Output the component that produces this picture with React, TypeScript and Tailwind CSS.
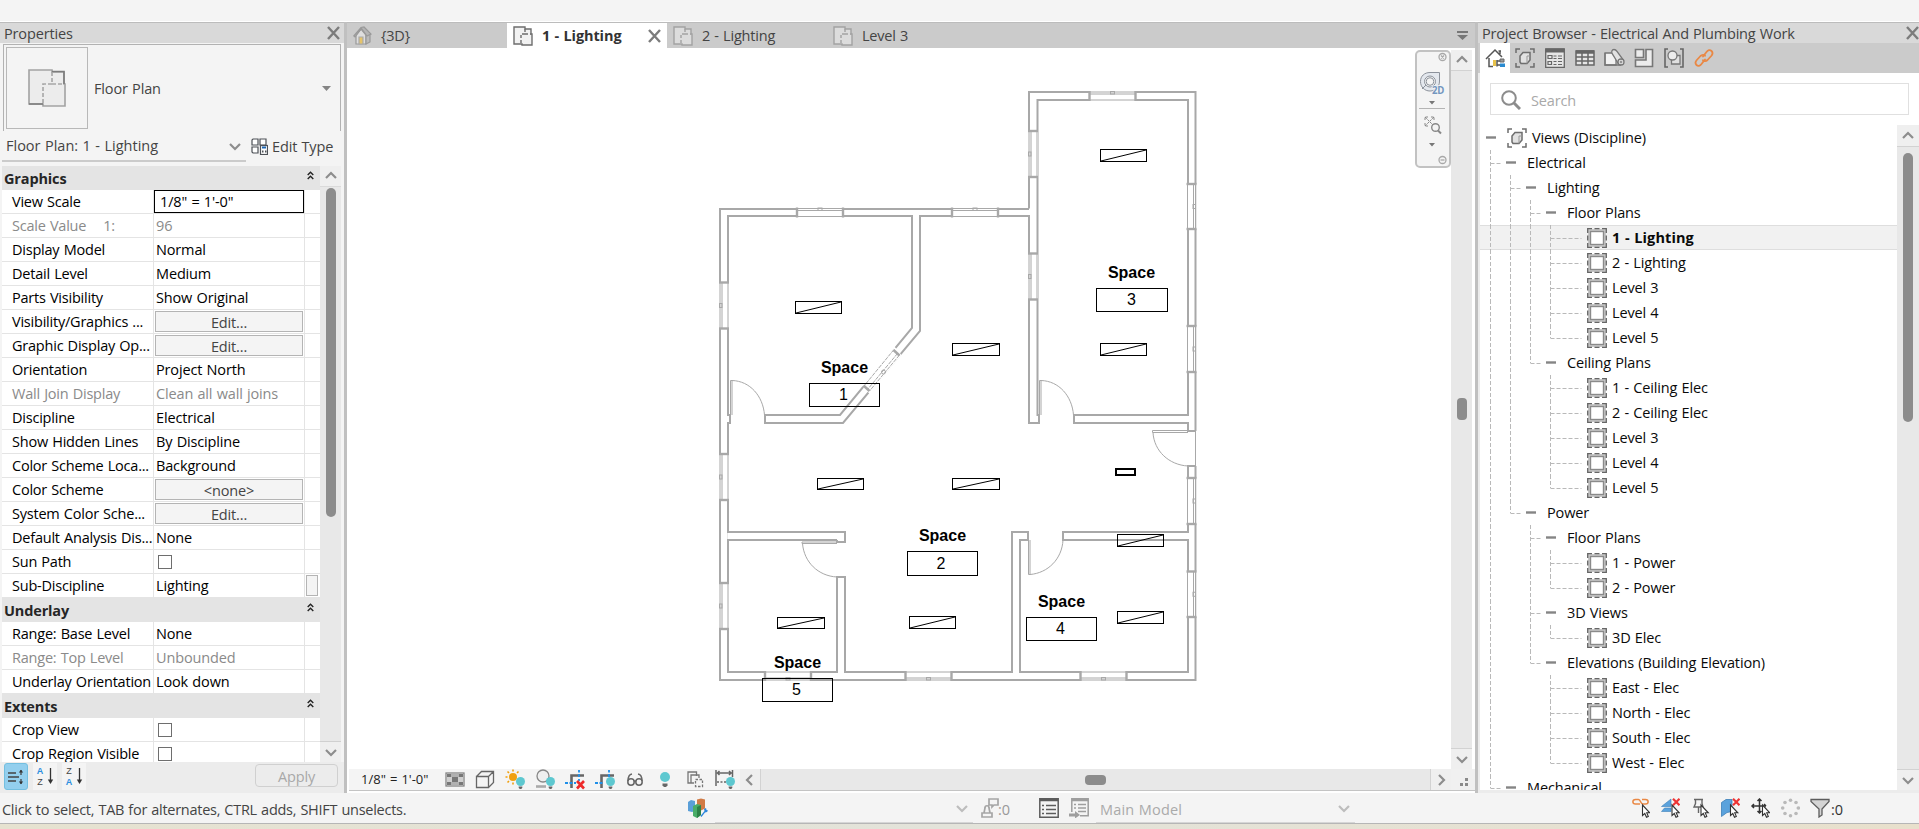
import React from "react";

/* ---------- small shared drawings ---------- */

const Chevron = ({ dir, className = "" }: { dir: "up" | "down" | "left" | "right"; className?: string }) => {
  const d = { up: "M1 8 6 3l5 5", down: "M1 4l5 5 5-5", left: "M8 1 3 6l5 5", right: "M4 1l5 5-5 5" }[dir];
  return (
    <svg width="12" height="12" viewBox="0 0 12 12" fill="none" stroke="currentColor" strokeWidth="2.2" className={className}>
      <path d={d} />
    </svg>
  );
};

const CloseX = () => (
  <svg width="13" height="14" viewBox="0 0 13 14" fill="none" stroke="#7c7c7c" strokeWidth="2.4">
    <path d="M1 1l11 12M12 1 1 13" />
  </svg>
);

const Collapse = () => (
  <svg width="7" height="9" viewBox="0 0 7 9" fill="none" stroke="#222" strokeWidth="1.4">
    <path d="M.7 4 3.5 1.2 6.3 4M.7 8 3.5 5.2 6.3 8" />
  </svg>
);

const PlanIcon = ({ dim = false }: { dim?: boolean }) => (
  <svg width="20" height="20" viewBox="0 0 20 20" fill={dim ? "#dcdcdc" : "#f2f2f2"} stroke={dim ? "#a2a2a2" : "#6e6e6e"} strokeWidth="1.4">
    <path d="M1 1h11v2h6v5h1v11H9v-1H1z" />
    <path d="M12 3v5h6M12 8H8v10" fill="none" strokeDasharray="3 2" />
  </svg>
);

const Bulb = () => (
  <>
    <circle cx="15.5" cy="12.5" r="4.5" fill="#5ec8d0" />
    <path d="M13.7 17.6h3.6v1.2l-1 1.2h-1.6l-1-1.2z" fill="#666" />
  </>
);

const Cursor = ({ x = 0, y = 0 }: { x?: number; y?: number }) => (
  <path
    transform={`translate(${x} ${y})`}
    d="M10.5 7v10.500l2.300-2 1.700 3.700 1.800-.8-1.600-3.600h3.100z"
    fill="#fff"
    stroke="#333"
    strokeWidth="1.1"
  />
);

/* ---------- properties palette ---------- */

type Row = { label: string; value?: string; kind?: "text" | "edit" | "button" | "check" | "sub"; dim?: boolean };

const graphics: Row[] = [
  { label: "View Scale", value: "1/8\" = 1'-0\"", kind: "edit" },
  { label: "Scale Value    1:", value: "96", dim: true },
  { label: "Display Model", value: "Normal" },
  { label: "Detail Level", value: "Medium" },
  { label: "Parts Visibility", value: "Show Original" },
  { label: "Visibility/Graphics ...", value: "Edit...", kind: "button" },
  { label: "Graphic Display Op...", value: "Edit...", kind: "button" },
  { label: "Orientation", value: "Project North" },
  { label: "Wall Join Display", value: "Clean all wall joins", dim: true },
  { label: "Discipline", value: "Electrical" },
  { label: "Show Hidden Lines", value: "By Discipline" },
  { label: "Color Scheme Loca...", value: "Background" },
  { label: "Color Scheme", value: "<none>", kind: "button" },
  { label: "System Color Sche...", value: "Edit...", kind: "button" },
  { label: "Default Analysis Dis...", value: "None" },
  { label: "Sun Path", kind: "check" },
  { label: "Sub-Discipline", value: "Lighting", kind: "sub" },
];
const underlay: Row[] = [
  { label: "Range: Base Level", value: "None" },
  { label: "Range: Top Level", value: "Unbounded", dim: true },
  { label: "Underlay Orientation", value: "Look down" },
];
const extents: Row[] = [
  { label: "Crop View", kind: "check" },
  { label: "Crop Region Visible", kind: "check" },
];

const PropRow = ({ row }: { row: Row }) => (
  <div className={`flex h-6 shrink-0 border-b border-[#e4e4e4] ${row.dim ? "text-[#8a8a8a]" : "text-black"}`}>
    <div className="w-[152px] shrink-0 overflow-hidden whitespace-pre border-r border-[#e4e4e4] pl-[10px] leading-[23px] tracking-[-0.22px]">{row.label}</div>
    <div className="flex w-[151px] shrink-0 items-center border-r border-[#e4e4e4]">
      {row.kind === "edit" ? (
        <div className="h-[23px] w-full border border-black pl-[5px] leading-[21px]">{row.value}</div>
      ) : row.kind === "button" ? (
        <div className="mx-px h-[21px] w-full border border-[#b4b4b4] bg-[#f4f4f4] text-center leading-[21px] text-[#444]">{row.value}</div>
      ) : row.kind === "check" ? (
        <div className="ml-1 size-[14px] border border-[#6e6e6e] bg-white" />
      ) : (
        <span className="pl-[2px] leading-[23px]">{row.value}</span>
      )}
    </div>
    {row.kind === "sub" && <div className="ml-px mt-px h-[21px] w-3 border border-[#b4b4b4] bg-[#f4f4f4]" />}
  </div>
);

const Section = ({ title, rows }: { title: string; rows: Row[] }) => (
  <>
    <div className="flex h-6 shrink-0 justify-between bg-[#e4e4e4] pl-[2px] pr-[6px] pt-[5px]">
      <span className="font-bold leading-[16px] text-[#262626]">{title}</span>
      <Collapse />
    </div>
    {rows.map((r) => (
      <PropRow key={r.label} row={r} />
    ))}
  </>
);

const Properties = () => (
  <aside className="flex w-[344px] shrink-0 flex-col bg-[#f4f4f4]">
    <div className="flex h-[21px] shrink-0 items-center justify-between border-t border-[#bcbcbc] bg-[#d9d9d9] pl-1 pr-1 text-[#444]">
      <span className="pt-[2px]">Properties</span>
      <CloseX />
    </div>
    <div className="ml-[3px] mr-[3px] mt-px flex h-[87px] shrink-0 items-start border-x border-t border-[#b2b2b2] pl-[2px] pt-[2px] text-[#444]">
      <div className="flex size-[82px] items-center justify-center border border-[#b8b8b8]">
        <svg width="38" height="38" viewBox="0 0 38 38" fill="#ececec" stroke="#a2a2a2" strokeWidth="1.6">
          <path d="M1 1h23v2h12v12h1v22H15v-2H1z" />
          <path d="M24 2.500h12V15M1 35h14" fill="none" stroke="#7c7c7c" />
          <path d="M24 3v12h12M24 15h-9v20" fill="none" stroke="#a6a6a6" strokeDasharray="4 2" />
        </svg>
      </div>
      <span className="pl-[6px] leading-[84px]">Floor Plan</span>
      <svg className="ml-auto mr-[9px] mt-[39px]" width="9" height="6" viewBox="0 0 9 6" fill="#858585">
        <path d="M0 0h9L4.500 5z" />
      </svg>
    </div>
    <div className="flex h-[35px] shrink-0 items-start text-[#444]">
      <div className="ml-[2px] flex h-[31px] w-[244px] items-center justify-between border-b-2 border-[#cbcbcb] pl-1 pr-[5px]">
        <span className="pt-px tracking-[0px]">Floor Plan: 1 - Lighting</span>
        <Chevron dir="down" className="text-[#8d8d8d]" />
      </div>
      <svg className="ml-[5px] mt-[7px]" width="17" height="17" viewBox="0 0 17 17" fill="#fff" stroke="#4d5157" strokeWidth="1.2">
        <path d="M2 1h5v6H1V2zM9 1h6v6H9zM1 9h6v6H2l-1-1z" />
        <rect x="9.500" y="7.500" width="7" height="9" />
        <path d="M11 9.500h4" stroke="#1c67b5" strokeWidth="2" />
        <path d="M11 13.500h1.500M14 13.500h1.500" strokeWidth="2" />
      </svg>
      <span className="ml-1 leading-[31px]">Edit Type</span>
    </div>
    <div className="flex h-[596px] shrink-0 pl-[2px]">
      <div className="flex w-[318px] flex-col overflow-hidden bg-white">
        <Section title="Graphics" rows={graphics} />
        <Section title="Underlay" rows={underlay} />
        <Section title="Extents" rows={extents} />
      </div>
      <div className="flex w-[21px] flex-col items-center bg-[#e8e8e8] text-[#8d8d8d]">
        <div className="flex h-[21px] w-full items-center justify-center border-b border-[#dadada] bg-[#efefef]">
          <Chevron dir="up" />
        </div>
        <div className="mt-px h-[329px] w-[10px] rounded-full bg-[#8c8c8c]" />
        <div className="mt-auto flex h-[21px] w-full items-center justify-center border-t border-[#d0d0d0] bg-[#efefef]">
          <Chevron dir="down" />
        </div>
      </div>
    </div>
    <div className="flex h-[31px] shrink-0 items-start bg-[#ececec] pl-1 pt-[1px]">
      <div className="flex h-[27px] w-6 items-center justify-center rounded-[3px] border border-[#74bfe0] bg-[#93cfee]">
        <svg width="18" height="18" viewBox="0 0 18 18" fill="none" stroke="#444" strokeWidth="1.3">
          <path d="M1 5h8M1 9h11M1 13h8M14 2v5M14 11v5" />
          <path d="m11.800 4.500 2.200-2.800 2.200 2.800zM11.800 13.500l2.200 2.800 2.200-2.800z" fill="#333" stroke="none" />
        </svg>
      </div>
      {["AZ", "ZA"].map((p) => (
        <div key={p} className="ml-[5px] flex h-[27px] w-[24px] items-center bg-[#f4f4f4] pl-[3px]">
          <div className="flex w-[8px] flex-col text-center font-['Liberation_Sans',sans-serif] text-[9px] leading-[10.5px] tracking-normal">
            {p.split("").map((c) => (
              <span key={c} className={c === "A" ? "font-bold text-[#2b8fe0]" : "text-[#444]"}>
                {c}
              </span>
            ))}
          </div>
          <svg className="ml-[3px]" width="7" height="17" viewBox="0 0 7 17">
            <path d="M3.500 0v13" stroke="#333" strokeWidth="1.300" />
            <path d="M.8 11.500h5.400L3.500 16z" fill="#333" />
          </svg>
        </div>
      ))}
      <div className="ml-auto mr-[6px] mt-px h-[23px] w-[83px] rounded-[4px] border border-[#d0d0d0] text-center leading-[23px] text-[#a8a8a8]">Apply</div>
    </div>
  </aside>
);

/* ---------- drawing area ---------- */

const Win = ({ x, y, len, side }: { x: number; y: number; len: number; side: "l" | "r" | "t" | "b" }) => {
  const v = side === "l" || side === "r";
  const outer = side === "l" || side === "t";
  const m = len / 2;
  const o = outer ? 0 : 8;
  const o2 = outer ? 2 : 6;
  const inr = outer ? 8 : 0;
  const mk = outer ? -0.5 : 5.5;
  const L = (a: number, b: number, c: number, d: number, w: number) =>
    v ? <line x1={x + b} y1={y + a} x2={x + d} y2={y + c} strokeWidth={w} /> : <line x1={x + a} y1={y + b} x2={x + c} y2={y + d} strokeWidth={w} />;
  return (
    <g stroke="#a8a8a8" fill="none">
      {v ? <rect x={x - 1} y={y} width="10" height={len} fill="#fff" stroke="none" /> : <rect x={x} y={y - 1} width={len} height="10" fill="#fff" stroke="none" />}
      {L(0, o, len, o, 1)}
      {L(0, o2, len, o2, 1)}
      {L(0, inr, len, inr, 1)}
      {L(0, -1, 0, 9, 2.4)}
      {L(len, -1, len, 9, 2.4)}
      {v ? <rect x={x + mk} y={y + m - 2} width="2.500" height="4" strokeWidth="1" /> : <rect x={x + m - 2} y={y + mk} width="4" height="2.500" strokeWidth="1" />}
    </g>
  );
};

const fixtures: [number, number, number, number][] = [
  [1100, 149, 46, 12],
  [795, 301, 46, 12],
  [952, 343, 47, 12],
  [1100, 343, 46, 12],
  [817, 478, 46, 11],
  [952, 478, 47, 11],
  [1117, 534, 46, 12],
  [1117, 611, 46, 12],
  [777, 617, 47, 11],
  [909, 616, 46, 12],
];

const tags = [
  { n: "1", x: 809, y: 383, w: 70, h: 23, cx: 844.5, base: 373, nx: 843.5, nb: 400 },
  { n: "3", x: 1096, y: 288, w: 71, h: 23, cx: 1131.5, base: 278, nx: 1131.5, nb: 305 },
  { n: "2", x: 907, y: 551, w: 70, h: 24, cx: 942.5, base: 541, nx: 941, nb: 569 },
  { n: "4", x: 1026, y: 617, w: 70, h: 23, cx: 1061.5, base: 607, nx: 1060.5, nb: 634 },
  { n: "5", x: 762, y: 678, w: 70, h: 23, cx: 797.5, base: 668, nx: 796.5, nb: 695 },
];

const FloorPlan = () => (
  <svg width="1104" height="721" viewBox="347 48 1104 721" className="block">
    <g fill="none" stroke="#a8a8a8" strokeWidth="2">
      <path d="M1029 208.500V92h166.500V431M1195.500 466V680H720V209h309" />
      <path d="M728 540h109M728 540v132h109V577h8v95h167V532h16v8h-8v132h168V540h-125v-8h125v-66h7" />
      <path d="M728 540V532h117v10h-8v-2M728 532V423h2v-8h-2V216h184v112L840 415H765v8h78l77-92V216h109v207h10v-8h-1.500V100H1188V415h-114v8h114v8h7" />
      <path d="M729 533v6" stroke="#fff" strokeWidth="3.500" />
    </g>
    <Win x={720} y={282.5} len={46} side="l" />
    <Win x={720} y={454} len={46} side="l" />
    <Win x={720} y={583} len={46} side="l" />
    <Win x={1029} y={131} len={46} side="l" />
    <Win x={1029} y={253.5} len={46} side="l" />
    <Win x={1187.5} y={184} len={45} side="r" />
    <Win x={1187.5} y={326} len={46} side="r" />
    <Win x={1187.5} y={478} len={46} side="r" />
    <Win x={1187.5} y={571.5} len={45.5} side="r" />
    <Win x={797} y={208.5} len={46} side="t" />
    <Win x={952} y={208.5} len={46} side="t" />
    <Win x={1089.5} y={92} len={46} side="t" />
    <Win x={765} y={672} len={46} side="b" />
    <Win x={905.5} y={672} len={46} side="b" />
    <Win x={1080.5} y={672} len={46} side="b" />

    <path d="M894.500 349l5 6-30 36.500-5.500-6z" fill="#fff" stroke="#fff" strokeWidth="3" />
    <g fill="none" stroke="#a8a8a8" strokeWidth="1">
      <path d="M894 349.500 864 386" strokeDasharray="4 1" />
      <path d="M899.500 355 869.500 391M897.500 353.500 867.500 389.500" strokeDasharray="4 1" />
      <circle cx="883.500" cy="372" r="2" />
      <path d="M893.500 350l6 5.500M863.500 385.500l6 5.500" strokeWidth="2.400" />
      <path d="M730.500 415V380.500h1.500V415M732 380.500C750 381 763 396 764.500 415" />
      <path d="M1039.500 415V380.500h1.500V415M1041 380.500C1059 381 1072 396 1073.500 415" />
      <path d="M1188 430.500H1152.500v2H1188M1153 432.500C1154 451 1169 465 1188 466M1195.500 431v35" />
      <path d="M837 542h-35v1.500h35M802.500 543.500C804 562 818 576 837 577" />
      <path d="M1028.500 540v34.500h1.500V540M1030 574.500C1048 573 1062 559 1063 540" />
    </g>

    <g fill="none" stroke="#000" strokeWidth="1">
      {fixtures.map(([x, y, w, h]) => (
        <g key={`${x}-${y}`}>
          <rect x={x + 0.5} y={y + 0.5} width={w} height={h} />
          <path d={`M${x + 1} ${y + h}L${x + w} ${y + 1}`} />
        </g>
      ))}
      <rect x="1116" y="469" width="19" height="6" strokeWidth="2" />
      {tags.map((t) => (
        <rect key={t.n} x={t.x + 0.5} y={t.y + 0.5} width={t.w} height={t.h} />
      ))}
    </g>
    {tags.map((t) => (
      <g key={t.n} textAnchor="middle" className="font-['Liberation_Sans',sans-serif] text-[16px] tracking-normal">
        <text x={t.cx} y={t.base} className="font-bold">
          Space
        </text>
        <text x={t.nx} y={t.nb}>
          {t.n}
        </text>
      </g>
    ))}
  </svg>
);

const NavBar = () => (
  <div className="absolute left-[1068px] top-[2px] h-[118px] w-[36px] rounded-[5px] border-2 border-[#c2c2c2] bg-[#f4f4f4]">
    <svg width="32" height="114" viewBox="0 0 32 114" fill="none" stroke="#8c929b" strokeWidth="1">
      <g stroke="#a8a8a8" strokeWidth="1.300">
        <circle cx="25.500" cy="5" r="3.500" />
        <path d="m24 3.500 3 3m0-3-3 3" />
        <circle cx="25.500" cy="108" r="3.500" />
        <path d="M23.500 108h4" />
      </g>
      <path d="M13 20.500h9.500V29c0 6-4 10-9.500 10s-9.500-4-9.500-9.500 4-9 9.500-9z" fill="#e4e8ee" />
      <circle cx="13" cy="29.500" r="5.500" fill="#f4f4f4" />
      <circle cx="13" cy="29.500" r="3.800" />
      <path d="m5 37 4-4" />
      <path d="M12 49h6l-3 3.500zM12 91h6l-3 3.500z" fill="#777" stroke="none" />
      <path d="M2 56.500h26" stroke="#b4b4b4" />
      <path d="M8 65l9 9M17 65l-9 9M8 68v-3h3M14 65h3v3M8 71v3h3" stroke="#888" strokeDasharray="2.500 1" />
      <circle cx="18.500" cy="75.500" r="3.800" stroke="#888" strokeWidth="1.400" fill="#f4f4f4" />
      <path d="m21 78.500 3 3" stroke="#888" strokeWidth="2" />
      <text x="15" y="42" fontSize="10" fontWeight="700" fill="#7396bf" stroke="#f4f4f4" strokeWidth="1.500" paintOrder="stroke" letterSpacing="-0.300" textLength="12" lengthAdjust="spacingAndGlyphs">
        2D
      </text>
    </svg>
  </div>
);

const ViewBarIcons = () => (
  <svg className="ml-4 shrink-0" width="291" height="21" viewBox="445 769 291 21" fill="none" stroke="#666" strokeWidth="1.300">
    <rect x="446" y="773" width="18" height="13" stroke="#858585" fill="#f4f4f4" />
    <path d="M447 774h4v3h-4zM459 774h4v3h-4zM452 777h6v5h-6zM447 782h4v3h-4zM459 782h4v3h-4z" fill="#777" stroke="none" />
    <path d="M447 777h5v5h-5zM458 777h5v5h-5z" fill="#cfcfcf" stroke="none" />
    <path d="M451 774h8v3h-8zM451 782h8v3h-8z" fill="#b0b0b0" stroke="none" />
    <path d="M476.500 776.500h12v11h-12zM476.500 776.500l5-5h12v11l-5 5M488.500 776.500l5-5" />
    <circle cx="513" cy="777" r="4" fill="#f0a010" stroke="none" />
    <path d="M513 769.500v2M513 782.500v2M505.500 777h2M507.500 771.500l1.500 1.500M518.500 771.500l-1.500 1.500M507.500 782.500l1.500-1.500" stroke="#f0a010" strokeWidth="1.600" />
    <g transform="translate(505 769)" stroke="none"><Bulb /></g>
    <circle cx="543" cy="776" r="6" fill="#efefef" stroke="#888" />
    <path d="M536 786.500h10" stroke="#aaa" strokeWidth="2.600" />
    <g transform="translate(535 769)" stroke="none"><Bulb /></g>
    <g strokeWidth="1.800">
      <path d="M571.500 788v-12.500H584" stroke="#666" strokeWidth="2.600" />
      <path d="M565 783h3M569.500 783h3M579 770v2.500M579 774v3" stroke="#1f8fe8" />
      <path d="M574 783h2M579 779v2" stroke="#1f8fe8" />
      <path d="m577 781 7 7.500M584 781l-7 7.500" stroke="#ee2a2a" strokeWidth="2.600" />
      <path d="M601.500 788v-12.500H614" stroke="#666" strokeWidth="2.600" />
      <path d="M595 783h3M599.500 783h3M609 770v2.500M609 774v3" stroke="#1f8fe8" />
    </g>
    <g transform="translate(595 769)" stroke="none"><Bulb /></g>
    <g strokeWidth="1.500">
      <circle cx="631" cy="782" r="3.200" />
      <circle cx="639" cy="782" r="3.200" />
      <path d="M628 781c0-4 1-6.500 4-7M642 781c0-4-1-6.500-4-7M634 781.500c.5-.8 1.500-.8 2 0" />
    </g>
    <circle cx="665" cy="777" r="5" fill="#5ec8d0" stroke="none" />
    <path d="M662.500 783.500h5v2l-1.500 1.500h-2l-1.500-1.500z" fill="#666" stroke="none" />
    <path d="M696.500 776v-4h-8.500v11h4M699 778v-3h-8v8h3" stroke="#777" />
    <rect x="695.500" y="779.500" width="7" height="7" strokeDasharray="2.500 1.500" stroke="#777" />
    <path d="M716 770v16M732.500 770v7M717 773h15M719.500 771l-2 2 2 2M729 771l2 2-2 2" strokeWidth="1.500" />
    <path d="M717 782h12" strokeDasharray="2 1.500" />
    <g transform="translate(715 769)" stroke="none"><Bulb /></g>
  </svg>
);

const tabs = [
  { label: "{3D}", home: true },
  { label: "1 - Lighting", active: true },
  { label: "2 - Lighting" },
  { label: "Level 3" },
];

const Drawing = () => (
  <main className="flex w-[1134px] shrink-0 flex-col border-x-[3px] border-[#c0c0c0] bg-white">
    <div className="flex h-[26px] shrink-0 border-t border-[#bcbcbc] bg-[#cbcbcb]">
      {tabs.map((t) => (
        <div key={t.label} className={`flex w-40 items-center pl-[6px] ${t.active ? "bg-white font-bold text-[#333]" : "text-[#444]"}`}>
          {t.home ? (
            <svg width="19" height="20" viewBox="0 0 19 20" stroke="#999" strokeWidth="1.200" fill="#dedede">
              <path d="M3 9v9h10V9L8 3z" />
              <path d="M13 18l4-2V8l-4 1z" fill="#bbb" />
              <path d="M.8 10 8 1.500l3-.5 7 7-4 2-5.500-7.500L2 11z" fill="#b4b4b4" />
              <path d="M6 11h4v7H6z" fill="#e6c46a" stroke="#aaa" />
            </svg>
          ) : (
            <PlanIcon dim={!t.active} />
          )}
          <span className={`pl-[9px] ${t.active ? "tracking-[-0.1px]" : "tracking-[-0.2px]"}`}>{t.label}</span>
          {t.active && (
            <span className="ml-auto mr-[6px]">
              <CloseX />
            </span>
          )}
        </div>
      ))}
      <svg className="ml-auto mr-[7px] mt-[8px]" width="11" height="10" viewBox="0 0 11 10" fill="#777">
        <path d="M0 0h11v2H0zM0 4h11L5.500 9z" />
      </svg>
    </div>
    <div className="flex h-[721px] shrink-0">
      <div className="relative w-[1104px]">
        <FloorPlan />
        <NavBar />
      </div>
      <div className="mt-[2px] flex w-[21px] flex-col items-center bg-[#e8e8e8] text-[#8d8d8d]">
        <div className="flex h-[21px] w-full items-center justify-center border-b border-[#d2d2d2] bg-[#efefef]">
          <Chevron dir="up" />
        </div>
        <div className="mt-[327px] h-[22px] w-[10px] rounded-[4px] bg-[#8c8c8c]" />
        <div className="mt-auto flex h-[21px] w-full items-center justify-center border-t border-[#d2d2d2] bg-[#efefef]">
          <Chevron dir="down" />
        </div>
      </div>
    </div>
    <div className="ml-[2px] flex h-[22px] shrink-0 border-b border-[#c4c4c4] bg-[#f4f4f4]">
      <span className="w-[80px] shrink-0 whitespace-nowrap pl-3 text-[13px] leading-[21px] tracking-[0px] text-[#222]">1/8" = 1'-0"</span>
      <ViewBarIcons />
      <div className="ml-1 flex w-[21px] items-center justify-center border-r border-[#d2d2d2] bg-[#efefef] text-[#8d8d8d]">
        <Chevron dir="left" />
      </div>
      <div className="flex grow items-center bg-[#e8e8e8]">
        <div className="ml-[324px] h-[10px] w-[21px] rounded-[4px] bg-[#8c8c8c]" />
      </div>
      <div className="flex w-[21px] items-center justify-center border-l border-[#d2d2d2] bg-[#efefef] text-[#8d8d8d]">
        <Chevron dir="right" />
      </div>
      <div className="w-[24px] bg-[#f0f0f0]">
        <svg width="21" height="21" viewBox="0 0 21 21" fill="#8a8a8a">
          <path d="M14 9h3v3h-3zM14 14h3v3h-3zM9 14h3v3H9z" />
        </svg>
      </div>
    </div>
  </main>
);

/* ---------- project browser ---------- */

const ViewsIcon = () => (
  <svg width="20" height="20" viewBox="0 0 20 20" fill="none" stroke="#6e6e6e" strokeWidth="1.500">
    <path d="M1 5V1h4M15 1h4v4M19 15v4h-4M5 19H1v-4" />
    <path d="m5 8 3-3.500h7V12l-3 3.500H6L5 14z" fill="#e2e2e2" />
    <path d="M12 15.500V8h3" stroke="#999" strokeWidth="1" />
  </svg>
);

const browserTabs = [
  <svg key="home" width="20" height="20" viewBox="0 0 20 20" fill="none" stroke="#555" strokeWidth="1.500">
    <path d="M1 11 10 2l7 7M4 10v8.500h4M15 3v3M13.500 3H16" />
    <path d="M8 12v6h3v-6z" fill="#e8c24a" stroke="none" />
    <path d="M12 12v6.500M12 13h3M12 17h3" />
    <path d="M15 11h4v3h-4z" fill="#999" stroke="#666" strokeWidth="1" />
    <path d="M15 15.500h5V19h-5z" fill="#2b8bd0" stroke="none" />
  </svg>,
  <ViewsIcon key="views" />,
  <svg key="legend" width="20" height="20" viewBox="0 0 20 20" fill="none" stroke="#666" strokeWidth="1.300">
    <path d="M.7 1h18.600v18.300H.7z" fill="#e6e6e6" />
    <path d="M.7 2.500h18.600" strokeWidth="4" />
    <path d="M3 7.500h4v3H3zM3 13.500h3.500v3H3zM8.500 8h3M13 8h4M8.500 10.500h3M13 10.500h4M8.500 13.500h3M13 13.500h4M8.500 16.500h3M13 16.500h4" strokeWidth="1.200" />
  </svg>,
  <svg key="table" width="20" height="20" viewBox="0 0 20 20" fill="none" stroke="#666" strokeWidth="1.500">
    <path d="M1 3h18v14H1z" fill="#e6e6e6" />
    <path d="M1 4h18" strokeWidth="3.500" />
    <path d="M1 9h18M1 13h18M7 5v12M13 5v12" />
  </svg>,
  <svg key="sheet" width="21" height="20" viewBox="0 0 21 20" fill="#f2f2f2" stroke="#777" strokeWidth="1.300">
    <path d="M1 5h11v12H1z" />
    <path d="M1 5v12h16" fill="none" />
    <path d="M9 7C6.500 4 8 1.500 10 1.500c1.500 0 2.300.8 3 1.800l6.500 9-4.500 4.500z" fill="#e2e2e2" />
    <circle cx="17" cy="14" r="3" />
    <circle cx="17" cy="14" r="1" fill="none" strokeWidth="1" />
  </svg>,
  <svg key="family" width="20" height="20" viewBox="0 0 20 20" fill="#ececec" stroke="#777" strokeWidth="1.600">
    <path d="M1.500 1.500h8v8h-8zM12 1.500h6.500v17h-17v-6.500H12z" />
  </svg>,
  <svg key="group" width="20" height="20" viewBox="0 0 20 20" fill="none" stroke="#666" strokeWidth="1.600">
    <path d="M4 1H1v18h3M16 1h3v18h-3" />
    <path d="M7.500 7.500h8.500v8.500H7.500z" fill="#e0e0e0" stroke="#777" strokeWidth="1.300" />
    <circle cx="8.500" cy="7.500" r="4.500" fill="#ececec" stroke="#777" strokeWidth="1.300" />
  </svg>,
  <svg key="link" width="20" height="20" viewBox="0 0 20 20" fill="none" stroke="#e98845" strokeWidth="1.800" strokeLinecap="round">
    <path d="M9 8.500 12.500 4c1.500-2 3.500-2.500 5-1s1 3.500-.3 5L13.500 12c-1.500 1.500-3.500 1.500-4.500.3" />
    <path d="M11 11.500 7.500 16c-1.500 2-3.500 2.500-5 1s-1-3.500.3-5L6.500 8C8 6.500 10 6.500 11 7.700" />
  </svg>,
];

type Node = { label: string; depth: number; leaf?: boolean; active?: boolean; root?: boolean };
const leaf = (label: string, active = false): Node => ({ label, depth: 4, leaf: true, active });

const tree: Node[] = [
  { label: "Views (Discipline)", depth: 0, root: true },
  { label: "Electrical", depth: 1 },
  { label: "Lighting", depth: 2 },
  { label: "Floor Plans", depth: 3 },
  leaf("1 - Lighting", true),
  leaf("2 - Lighting"),
  leaf("Level 3"),
  leaf("Level 4"),
  leaf("Level 5"),
  { label: "Ceiling Plans", depth: 3 },
  leaf("1 - Ceiling Elec"),
  leaf("2 - Ceiling Elec"),
  leaf("Level 3"),
  leaf("Level 4"),
  leaf("Level 5"),
  { label: "Power", depth: 2 },
  { label: "Floor Plans", depth: 3 },
  leaf("1 - Power"),
  leaf("2 - Power"),
  { label: "3D Views", depth: 3 },
  leaf("3D Elec"),
  { label: "Elevations (Building Elevation)", depth: 3 },
  leaf("East - Elec"),
  leaf("North - Elec"),
  leaf("South - Elec"),
  leaf("West - Elec"),
  { label: "Mechanical", depth: 1 },
];

/* True when a later sibling exists at the given depth before the branch closes. */
const continues = (i: number, depth: number) => {
  for (let k = i + 1; k < tree.length; k++) {
    if (tree[k].depth === depth) return true;
    if (tree[k].depth < depth) return false;
  }
  return false;
};

const TreeRow = ({ node, i }: { node: Node; i: number }) => {
  const w = node.leaf ? 107 : 17 + node.depth * 20;
  const own = 10 + (node.depth - 1) * 20 + 0.5;
  return (
    <div className={`flex h-[25px] shrink-0 items-center ${node.active ? "border-y border-[#dedede] bg-[#f1f1f1] font-bold" : ""}`}>
      <svg className="-my-px shrink-0" width={w} height="25" viewBox={`0 0 ${w} 25`} fill="none" stroke="#b9b9b9" strokeWidth="1" strokeDasharray="4 2">
        {Array.from({ length: Math.max(node.depth - 1, 0) }, (_, d) =>
          continues(i, d + 1) ? <path key={d} d={`M${10.5 + d * 20} 0V25`} /> : null,
        )}
        {node.depth > 0 && <path d={`M${own} 0V${continues(i, node.depth) ? 25 : 13}`} />}
        {node.depth > 0 && <path d={`M${own} 13.500H${node.leaf ? own + 31 : own + 11}`} />}
        {!node.leaf && <path d={`M${6 + node.depth * 20} 12.500h10`} stroke="#858585" strokeWidth="2.400" strokeDasharray="none" />}
      </svg>
      {node.root && (
        <span className="ml-[10px] mr-[5px]">
          <ViewsIcon />
        </span>
      )}
      {node.leaf && (
        <svg className="mr-[5px] shrink-0" width="20" height="20" viewBox="0 0 20 20" fill="none">
          <rect x="2" y="2" width="16" height="16" stroke="#c8c8c8" strokeWidth="2" />
          <path d="M.700 5V.700H5M7.500.700h5M15 .700h4.300V5M19.300 7.500v5M19.300 15v4.300H15M12.500 19.300h-5M5 19.300H.700V15M.700 12.500v-5" stroke="#666" strokeWidth="1.300" />
          <rect x="3.500" y="3.500" width="13" height="13" fill="#fff" stroke="#8a8a8a" strokeWidth="1.400" />
        </svg>
      )}
      <span className={`whitespace-nowrap leading-[25px] ${node.leaf || node.root ? "" : "ml-[10px]"} ${node.active ? "tracking-[0.1px]" : ""}`}>
        {node.label}
      </span>
    </div>
  );
};

const Browser = () => (
  <aside className="flex w-[441px] shrink-0 flex-col bg-[#ececec]">
    <div className="flex h-[21px] shrink-0 items-center justify-between border-t border-[#bcbcbc] bg-[#d9d9d9] pl-1 text-[#444]">
      <span className="whitespace-nowrap pt-[2px] tracking-[-0.2px]">Project Browser - Electrical And Plumbing Work</span>
      <CloseX />
    </div>
    <div className="flex h-[30px] shrink-0 bg-[#cbcbcb] pl-[2px]">
      {browserTabs.map((icon, i) => (
        <div key={i} className={`flex w-[29.9px] items-center justify-center ${i === 0 ? "bg-white" : ""}`}>
          {icon}
        </div>
      ))}
    </div>
    <div className="ml-[2px] flex h-[52px] shrink-0 bg-white pl-[10px] pr-[10px] pt-[10px]">
      <div className="flex h-8 w-full items-center border border-[#e0e0e0] pl-[10px] pt-[2px] text-[#a9a9a9]">
        <svg width="20" height="20" viewBox="0 0 20 20" fill="none" stroke="#8c8c8c">
          <circle cx="8" cy="8" r="6.800" strokeWidth="2" />
          <path d="m13 13 6 6" strokeWidth="3" />
        </svg>
        <span className="pl-[10px] pt-px">Search</span>
      </div>
    </div>
    <div className="ml-[2px] flex h-[665px] shrink-0">
      <div className="flex w-[417px] flex-col overflow-hidden bg-white text-[#0a0a0a]">
        {tree.map((n, i) => (
          <TreeRow key={i} node={n} i={i} />
        ))}
      </div>
      <div className="flex w-[22px] flex-col items-center bg-[#e8e8e8] text-[#8d8d8d]">
        <div className="flex h-[22px] w-full items-center justify-center border-b border-[#d2d2d2] bg-[#efefef]">
          <Chevron dir="up" />
        </div>
        <div className="mt-[6px] h-[269px] w-[10px] rounded-full bg-[#8c8c8c]" />
        <div className="mt-auto flex h-[21px] w-full items-center justify-center border-t border-[#d2d2d2] bg-[#efefef]">
          <Chevron dir="down" />
        </div>
      </div>
    </div>
  </aside>
);

/* ---------- status bar ---------- */

const RedX = () => <path d="m13 .800 6.500 6.500M19.500.800 13 7.300" stroke="#ee3535" strokeWidth="2.200" />;

const statusTools = [
  <g key="link">
    <path transform="translate(2 0)" d="M8 6H3.500C0 6 0 1.500 3.500 1.500h3C9 1.500 8 6 11 6h2.500C17 6 17 1.500 13.500 1.500H10" stroke="#e98845" strokeWidth="1.500" />
    <Cursor x={2} />
  </g>,
  <g key="underlay">
    <path d="M1.500 8.500 11 1v7.500zM1.500 13.500l3-3.500H11v3.500z" fill="#5aa2dc" stroke="#3c7fb8" strokeWidth=".6" />
    <RedX />
    <Cursor x={1.5} />
  </g>,
  <g key="pin">
    <path transform="translate(2 0)" d="M2 1.500h9M3.500 1.500v4L2 9h9l-1-3.500v-4M6.500 9v6" stroke="#666" strokeWidth="1.400" />
    <Cursor x={0.5} />
  </g>,
  <g key="face">
    <path d="M1.500 4.500l4.500-3h6v12l-5 1-5.500 4z" fill="#5aa2dc" stroke="#3c7fb8" strokeWidth=".8" />
    <RedX />
    <Cursor x={0} />
  </g>,
  <g key="drag">
    <path d="M9.500 1v14M2 8h14M7.500 3l2-2 2 2M7.500 13l2 2 2-2M4 6 2 8l2 2M14 6l2 2" stroke="#333" strokeWidth="1.500" />
    <Cursor x={2} />
  </g>,
  <g key="busy" fill="#b9b9b9">
    {[0, 1, 2, 3, 4, 5, 6, 7].map((k) => (
      <circle key={k} cx={10.5 + 7.8 * Math.cos((k * Math.PI) / 4)} cy={10 + 7.8 * Math.sin((k * Math.PI) / 4)} r="1.800" />
    ))}
  </g>,
  <g key="filter">
    <path d="M1 1.500h18v2L12 11v6l-3 2v-8L1 3.500z" fill="#d4d4d4" stroke="#5c5c5c" strokeWidth="1.300" />
  </g>,
];

const StatusBar = () => (
  <footer className="flex h-[31px] shrink-0 border-b border-[#b6b6b6] bg-[#f4f4f4] text-[#444]">
    <span className="w-[688px] shrink-0 pl-[2px] leading-[34px] tracking-[-0.27px]">Click to select, TAB for alternates, CTRL adds, SHIFT unselects.</span>
    <svg className="mt-[5px] shrink-0" width="20" height="20" viewBox="0 0 20 20">
      <path d="M0 4l3-2 4 1v10l-3 1-4-1z" fill="#5a9fd8" />
      <path d="M9 1.500l4-1 4 1v9l-4 2-4-1z" fill="#d07a45" />
      <path d="M5 8l4-2 4 1v10l-4 3-4-2z" fill="#49ad68" />
      <path d="M9 9v11l4-3V7z" fill="#2c8247" />
      <path d="m12.500 18 4-5-.5-2 2-1 .5 2 1.500.5-1 1.500-2 .5-3.500 4.500z" fill="#2b86dc" />
    </svg>
    <div className="ml-[7px] flex h-[30px] w-[258px] shrink-0 items-center justify-end border-b border-[#d6d6d6] pr-[5px] text-[#bdbdbd]">
      <Chevron dir="down" />
    </div>
    <svg className="ml-2 mt-[5px] shrink-0" width="18" height="20" viewBox="0 0 18 20" fill="none" stroke="#a5a5a5" strokeWidth="1.700">
      <path d="M8 1h9v6h-4l-2 2V7H8zM1 19h10v-4H1zM3 15l1-5c0-3 4-3 4 0l1 5z" />
    </svg>
    <span className="-ml-px w-[41px] shrink-0 leading-[34px] text-[#999]">:0</span>
    <svg className="mt-[5px] shrink-0" width="20" height="20" viewBox="0 0 20 20" fill="none" stroke="#5c5c5c" strokeWidth="1.500">
      <path d="M.8.800h18.400v18.400H.8z" />
      <path d="M1 2h18" strokeWidth="2.500" />
      <path d="M3 7.500h2M7 7.500h10M3 11.500h2M7 11.500h10M3 15.500h2M7 15.500h10" />
    </svg>
    <svg className="ml-[10px] mt-[5px] shrink-0" width="20" height="20" viewBox="0 0 20 20" fill="none" stroke="#9e9e9e" strokeWidth="1.500">
      <path d="M2.800 14V.800h16.400v17H11" />
      <path d="M3 2h16" strokeWidth="2.500" />
      <path d="M5 6.500h2M9 6.500h8M5 10h2M9 10h8M9 13.500h8" />
      <path d="M0 17h7" strokeWidth="3" />
      <path d="m6 13 5 4-5 3.500z" fill="#9e9e9e" stroke="none" />
    </svg>
    <div className="ml-[7px] flex h-[30px] w-[259px] shrink-0 items-center justify-between border-b border-[#d6d6d6] pl-1 pr-[5px] text-[#aaa]">
      <span className="pt-1 tracking-[0.15px]">Main Model</span>
      <Chevron dir="down" className="text-[#bdbdbd]" />
    </div>
    <div className="ml-auto mt-[5px] flex gap-[10px] pr-px">
      {statusTools.map((g, i) => (
        <svg key={i} width="20" height="20" viewBox="0 0 20 20" fill="none">
          {g}
        </svg>
      ))}
    </div>
    <span className="w-[88px] leading-[34px] text-[#333]">:0</span>
  </footer>
);

export default function App() {
  return (
    <div className="flex h-[829px] w-[1919px] flex-col overflow-hidden bg-[#f4f4f4] font-['Open_Sans','Noto_Sans',sans-serif] text-[14.5px] leading-[20px] tracking-[-0.15px] [word-spacing:0.7px]">
      <div className="h-[22px] shrink-0 border-b border-white" />
      <div className="flex h-[771px] shrink-0">
        <Properties />
        <Drawing />
        <Browser />
      </div>
      <StatusBar />
      <div className="h-[5px] shrink-0 bg-gradient-to-r from-[#e6e2d0] via-[#e3e3da] to-[#e8e0cc]" />
    </div>
  );
}
